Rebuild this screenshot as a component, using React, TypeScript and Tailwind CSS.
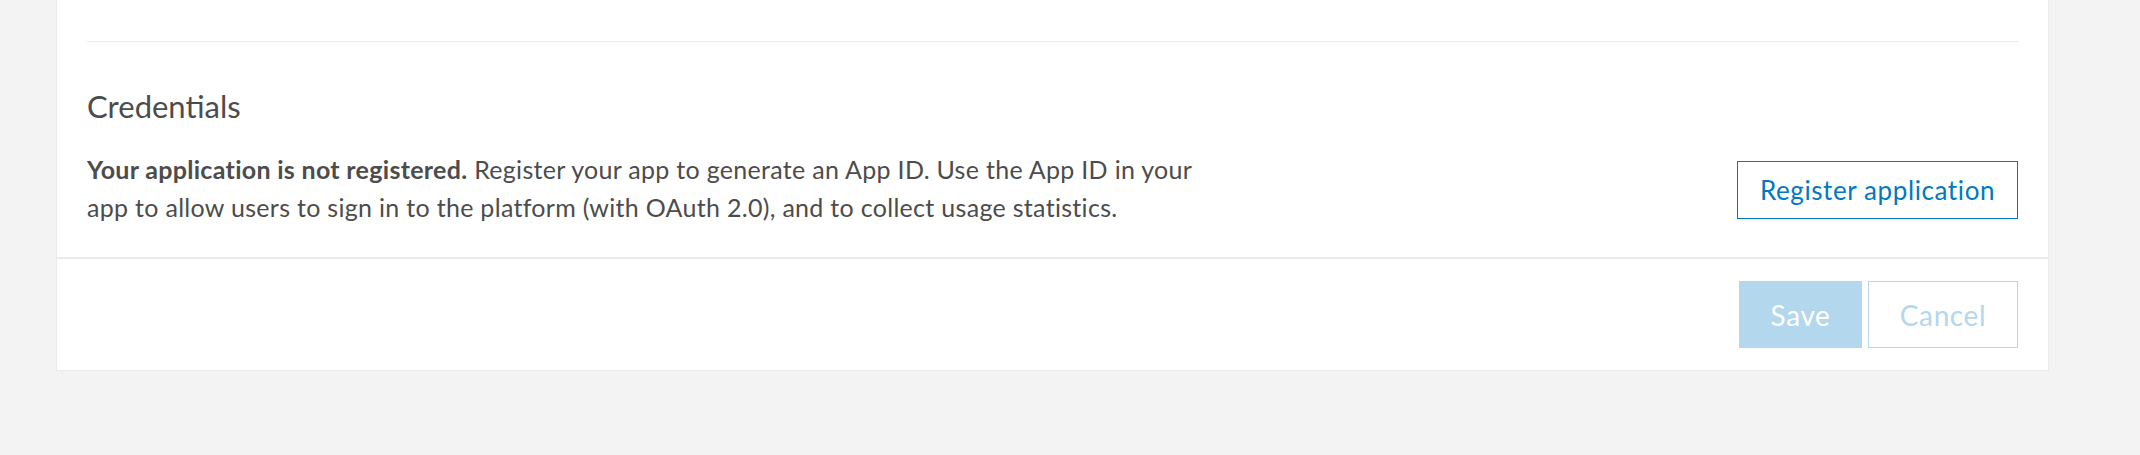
import React from "react";

/** Credentials panel of the app settings page */
function CredentialsSection() {
  return (
    <div className="px-[30px] pb-[31px]">
      {/* divider carried over from the section above */}
      <div className="h-[41px]" />
      <div className="border-t border-[#ebebeb]" />

      <h2 className="mt-[46px] text-[31px] leading-[37px] font-normal text-[#4c4c4c]">
        Credentials
      </h2>

      <div className="mt-[25px] flex items-start justify-between">
        <p className="w-[1120px] text-[25px] leading-[38px] tracking-[0.3px] text-[#4c4c4c]">
          <span className="font-bold">Your application is not registered.</span>{" "}
          Register your app to generate an App ID. Use the App ID in your app to
          allow users to sign in to the platform (with OAuth 2.0), and to
          collect usage statistics.
        </p>
        <button className="mt-[11px] h-[58px] w-[281px] border border-[#0079c1] bg-white text-[26px] tracking-[0.6px] text-[#0079c1]">
          Register application
        </button>
      </div>
    </div>
  );
}

export default function App() {
  return (
    <div
      className="h-[455px] w-full bg-[#f3f3f3] pl-[56px] pr-[91px]"
      style={{ fontFamily: "Lato, 'Noto Sans', sans-serif" }}
    >
      <div className="border-x border-b border-[#ebebeb] bg-white">
        <CredentialsSection />

        {/* seam between body and footer */}
        <div className="h-[2px] bg-[#ebebeb]" />

        {/* footer actions */}
        <div className="flex justify-end gap-[6px] px-[30px] pt-[22px] pb-[22px]">
          <button className="h-[67px] w-[123px] bg-[#b3d7ec] text-[28px] tracking-[0.6px] text-white">
            Save
          </button>
          <button className="h-[67px] w-[150px] border border-[#b3d7ec] bg-white text-[28px] tracking-[0.6px] text-[#b3d7ec]">
            Cancel
          </button>
        </div>
      </div>
    </div>
  );
}
